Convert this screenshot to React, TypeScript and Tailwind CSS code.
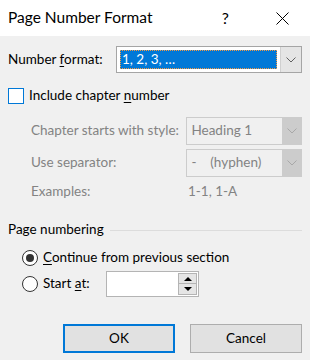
import React from "react";

const Chevron = ({ color = "#606060" }: { color?: string }) => (
  <svg width="10" height="6" viewBox="0 0 10 6" fill="none">
    <polyline points="0.5,0.5 5,5 9.5,0.5" stroke={color} strokeWidth="1" />
  </svg>
);

const Combo = ({ text }: { text: string }) => (
  <div className="flex h-[28px] w-[116px] border border-[#cccccc] bg-[#f0f0f0]">
    <div className="flex flex-1 items-center whitespace-pre pl-[4px] text-[#838383]">{text}</div>
    <div className="flex w-[19px] items-center justify-center bg-[#cccccc]">
      <Chevron color="#a8a8a8" />
    </div>
  </div>
);

export default function App() {
  return (
    <div
      className="flex h-[360px] w-[310px] flex-col whitespace-nowrap bg-[#f0f0f0] text-[13.5px] leading-none text-black"
      style={{ fontFamily: 'Lato, "Noto Sans", sans-serif' }}
    >
      {/* Title bar */}
      <div className="flex h-[36px] items-center bg-white pl-[8px]">
        <span className="text-[15.5px]">Page Number Format</span>
        <span className="ml-auto mr-[47px] text-[16px]">?</span>
        <svg width="13" height="13" viewBox="0 0 13 13" className="mr-[21px]">
          <path d="M0.5 0.5 L12.5 12.5 M12.5 0.5 L0.5 12.5" stroke="#000" strokeWidth="1" />
        </svg>
      </div>

      <div className="flex flex-col px-[8px]">
        {/* Number format */}
        <div className="mt-[10px] flex h-[27px] items-center">
          <span className="w-[108px]">
            Number <span className="underline underline-offset-2">f</span>ormat:
          </span>
          <div className="flex h-[27px] w-[186px] border border-[#a5a5a5] bg-white">
            <div className="flex flex-1 p-[3px]">
              <div className="flex flex-1 items-center border border-dotted border-[#f59a43] bg-[#0078d7] pl-[1px] text-white">
                1, 2, 3, …
              </div>
            </div>
            <div className="flex w-[21px] items-center justify-center border-l border-[#d0d0d0] bg-[#e5e5e5]">
              <Chevron />
            </div>
          </div>
        </div>

        {/* Include chapter number */}
        <div className="mt-[15px] flex h-[16px] items-center">
          <div className="h-[16px] w-[16px] border border-[#0078d7] bg-white" />
          <span className="ml-[5px]">
            Include chapter <span className="underline underline-offset-2">n</span>umber
          </span>
        </div>

        {/* Chapter starts with style */}
        <div className="mt-[13px] flex h-[28px] items-center pl-[23px] text-[#838383]">
          <span className="w-[156px]">Chapter starts with style:</span>
          <Combo text="Heading 1" />
        </div>

        {/* Use separator */}
        <div className="mt-[4px] flex h-[28px] items-center pl-[23px] text-[#838383]">
          <span className="w-[156px]">Use separator:</span>
          <Combo text="-    (hyphen)" />
        </div>

        {/* Examples */}
        <div className="mt-[7px] flex h-[16px] items-center pl-[23px] text-[#838383]">
          <span className="w-[157px]">Examples:</span>
          <span>1-1, 1-A</span>
        </div>

        {/* Page numbering */}
        <div className="mt-[22px] flex h-[16px] items-center">
          <span>Page numbering</span>
          <div className="ml-[6px] h-px flex-1 bg-[#dcdcdc]" />
        </div>

        {/* Continue */}
        <div className="mt-[12px] flex h-[16px] items-center pl-[14px]">
          <div className="flex h-[16px] w-[16px] items-center justify-center rounded-full border border-[#333333] bg-white">
            <div className="h-[8px] w-[8px] rounded-full bg-[#333333]" />
          </div>
          <span className="ml-[5px]">
            <span className="underline underline-offset-2">C</span>ontinue from previous section
          </span>
        </div>

        {/* Start at */}
        <div className="mt-[5px] flex h-[26px] items-center pl-[14px]">
          <div className="h-[16px] w-[16px] rounded-full border border-[#333333] bg-white" />
          <span className="ml-[5px] w-[63px]">
            Start <span className="underline underline-offset-2">a</span>t:
          </span>
          <div className="flex h-[26px] w-[93px] border border-[#b4b4b4] bg-white">
            <div className="flex-1" />
            <div className="mr-[1px] mt-[1px] flex w-[19px] flex-col gap-0">
              <div className="flex h-[11px] items-center justify-center border border-[#b4b4b4] bg-[#e5e5e5]">
                <svg width="8" height="4" viewBox="0 0 8 4">
                  <polygon points="0,4 8,4 4,0" fill="#000" />
                </svg>
              </div>
              <div className="flex h-[11px] items-center justify-center border border-t-0 border-[#b4b4b4] bg-[#e5e5e5]">
                <svg width="8" height="4" viewBox="0 0 8 4">
                  <polygon points="0,0 8,0 4,4" fill="#000" />
                </svg>
              </div>
            </div>
          </div>
        </div>

        {/* Buttons */}
        <div className="mt-[27px] flex h-[29px] justify-end gap-[15px]">
          <div className="flex w-[112px] items-center justify-center border-2 border-[#0078d7] bg-[#e1e1e1]">
            OK
          </div>
          <div className="flex w-[112px] items-center justify-center border border-[#adadad] bg-[#e1e1e1]">
            Cancel
          </div>
        </div>
      </div>
    </div>
  );
}
